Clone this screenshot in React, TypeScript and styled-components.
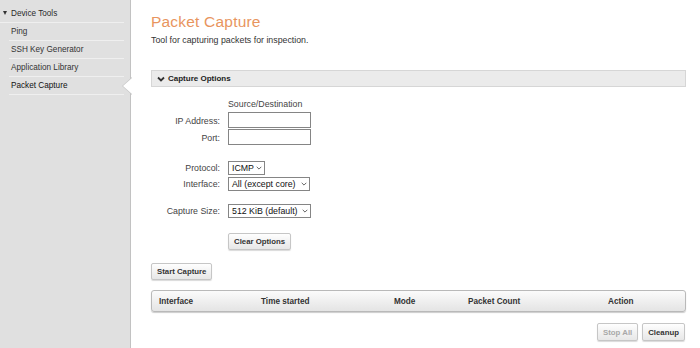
import styled, { createGlobalStyle } from 'styled-components';

const GlobalStyle = createGlobalStyle`
  html, body {
    margin: 0;
    padding: 0;
    background: #ffffff;
  }
  body {
    font-family: "Liberation Sans", Arial, sans-serif;
    color: #333333;
  }
`;

const Page = styled.div`
  display: flex;
  width: 700px;
  height: 348px;
  overflow: hidden;
`;

const Sidebar = styled.nav`
  width: 130px;
  flex-shrink: 0;
  background: #e0e0e0;
  border-right: 1px solid #c2c2c2;
  padding-top: 4px;
  box-sizing: content-box;
  font-size: 8.2px;
  color: #2a2a2a;
`;

const GroupTitle = styled.div`
  display: flex;
  align-items: center;
  height: 18px;
  padding-left: 3px;
  border-bottom: 1px solid #efefef;
  margin-right: 6px;
`;

const Caret = styled.span`
  display: inline-block;
  width: 0;
  height: 0;
  border-left: 2.5px solid transparent;
  border-right: 2.5px solid transparent;
  border-top: 4px solid #333;
  margin-right: 4px;
`;

const NavList = styled.ul`
  list-style: none;
  margin: 0 6px 0 9px;
  padding: 0;
`;

const NavItem = styled.li<{ $active?: boolean }>`
  position: relative;
  display: flex;
  align-items: center;
  height: 17px;
  padding-left: 2px;
  border-bottom: 1px solid #efefef;
  color: ${(p) => (p.$active ? '#111' : '#333')};

  ${(p) =>
    p.$active &&
    `
    &::before {
      content: '';
      position: absolute;
      right: -8px;
      top: 0px;
      border-top: 9px solid transparent;
      border-bottom: 9px solid transparent;
      border-right: 10px solid #c8c8c8;
    }
    &::after {
      content: '';
      position: absolute;
      right: -8px;
      top: 1px;
      border-top: 8px solid transparent;
      border-bottom: 8px solid transparent;
      border-right: 9px solid #ffffff;
    }
  `}
`;

const Main = styled.main`
  flex: 1;
  padding: 13px 14px 0 20px;
  font-size: 8.8px;
`;

const Title = styled.h1`
  margin: 0;
  font-size: 15.5px;
  line-height: 18px;
  font-weight: normal;
  color: #e8955e;
  letter-spacing: 0.2px;
`;

const Subtitle = styled.p`
  margin: 3px 0 0;
  line-height: 12px;
  color: #333;
`;

const SectionBar = styled.div`
  display: flex;
  align-items: center;
  gap: 3px;
  height: 15px;
  margin-top: 24px;
  padding-left: 5px;
  background: #ebebeb;
  border: 1px solid #d6d6d6;
  font-size: 8px;
  font-weight: bold;
  color: #222;
`;

const FormGrid = styled.div`
  display: grid;
  grid-template-columns: 69px auto;
  column-gap: 8px;
  align-items: center;
  justify-content: start;
  margin-top: 10px;
  color: #444;
`;

const Label = styled.label`
  text-align: right;
  line-height: 16px;
`;

const ColumnHead = styled.div`
  grid-column: 2;
  line-height: 15px;
`;

const Spacer = styled.div<{ $h: number }>`
  grid-column: 1 / span 2;
  height: ${(p) => p.$h}px;
`;

const TextInput = styled.input`
  width: 83px;
  height: 16px;
  box-sizing: border-box;
  border: 1px solid #858585;
  margin: 0 0 1px;
  padding: 0 3px;
  font: inherit;
`;

const SelectBox = styled.div<{ $w: number }>`
  display: flex;
  align-items: center;
  justify-content: space-between;
  width: ${(p) => p.$w}px;
  height: 14px;
  box-sizing: border-box;
  border: 1px solid #858585;
  padding: 0 2px 0 3px;
  margin: 1px 0;
  font-size: 8.8px;
  color: #111;
  white-space: nowrap;
`;

const Btn = styled.button<{ $disabled?: boolean }>`
  height: ${(p) => (p.$disabled !== undefined ? 18 : 17)}px;
  padding: 0 5px;
  border: 1px solid #c6c6c6;
  border-radius: 2px;
  background: linear-gradient(#fefefe, #e7e7e7);
  box-shadow: 0 1px 1px rgba(0, 0, 0, 0.15);
  font-family: "Liberation Sans", Arial, sans-serif;
  font-size: 7.8px;
  font-weight: bold;
  color: ${(p) => (p.$disabled ? '#a8a8a8' : '#333')};
  cursor: default;
`;

const ClearRow = styled.div`
  grid-column: 2;
  margin-top: 14px;
`;

const StartRow = styled.div`
  margin-top: 13px;
`;

const TableHead = styled.div`
  display: grid;
  grid-template-columns: 102px 133px 74px 140px 1fr;
  align-items: center;
  height: 20px;
  margin-top: 10px;
  padding-left: 7px;
  border: 1px solid #b9b9b9;
  border-radius: 3px;
  background: linear-gradient(#fbfbfb, #e4e4e4);
  box-shadow: 0 1px 1px rgba(0, 0, 0, 0.2);
  font-size: 8.2px;
  font-weight: bold;
  color: #333;
`;

const Footer = styled.div`
  display: flex;
  justify-content: flex-end;
  gap: 4px;
  margin-top: 11px;
  margin-right: 1px;
`;

function Chevron({ size = 6, stroke = 1 }: { size?: number; stroke?: number }) {
  return (
    <svg width={size + 2} height={size} viewBox="0 0 8 6" fill="none">
      <polyline points="1,1.5 4,4.5 7,1.5" stroke="#333" strokeWidth={stroke} />
    </svg>
  );
}

function Select({ value, width }: { value: string; width: number }) {
  return (
    <SelectBox $w={width}>
      <span>{value}</span>
      <svg width="6" height="4" viewBox="0 0 6 4" fill="none">
        <polyline points="0.7,0.8 3,3.1 5.3,0.8" stroke="#555" strokeWidth="0.9" />
      </svg>
    </SelectBox>
  );
}

const navItems = ['Ping', 'SSH Key Generator', 'Application Library', 'Packet Capture'];
const columns = ['Interface', 'Time started', 'Mode', 'Packet Count', 'Action'];

export default function App() {
  return (
    <Page>
      <GlobalStyle />
      <Sidebar>
        <GroupTitle>
          <Caret />
          Device Tools
        </GroupTitle>
        <NavList>
          {navItems.map((item) => (
            <NavItem key={item} $active={item === 'Packet Capture'}>
              {item}
            </NavItem>
          ))}
        </NavList>
      </Sidebar>
      <Main>
        <Title>Packet Capture</Title>
        <Subtitle>Tool for capturing packets for inspection.</Subtitle>
        <SectionBar>
          <Chevron size={6} stroke={1.8} />
          Capture Options
        </SectionBar>
        <FormGrid>
          <ColumnHead>Source/Destination</ColumnHead>
          <Label>IP Address:</Label>
          <TextInput />
          <Label>Port:</Label>
          <TextInput />
          <Spacer $h={14} />
          <Label>Protocol:</Label>
          <Select value="ICMP" width={37} />
          <Label>Interface:</Label>
          <Select value="All (except core)" width={82} />
          <Spacer $h={11} />
          <Label>Capture Size:</Label>
          <Select value="512 KiB (default)" width={83} />
          <ClearRow>
            <Btn>Clear Options</Btn>
          </ClearRow>
        </FormGrid>
        <StartRow>
          <Btn>Start Capture</Btn>
        </StartRow>
        <TableHead>
          {columns.map((c) => (
            <span key={c}>{c}</span>
          ))}
        </TableHead>
        <Footer>
          <Btn $disabled>Stop All</Btn>
          <Btn $disabled={false}>Cleanup</Btn>
        </Footer>
      </Main>
    </Page>
  );
}
